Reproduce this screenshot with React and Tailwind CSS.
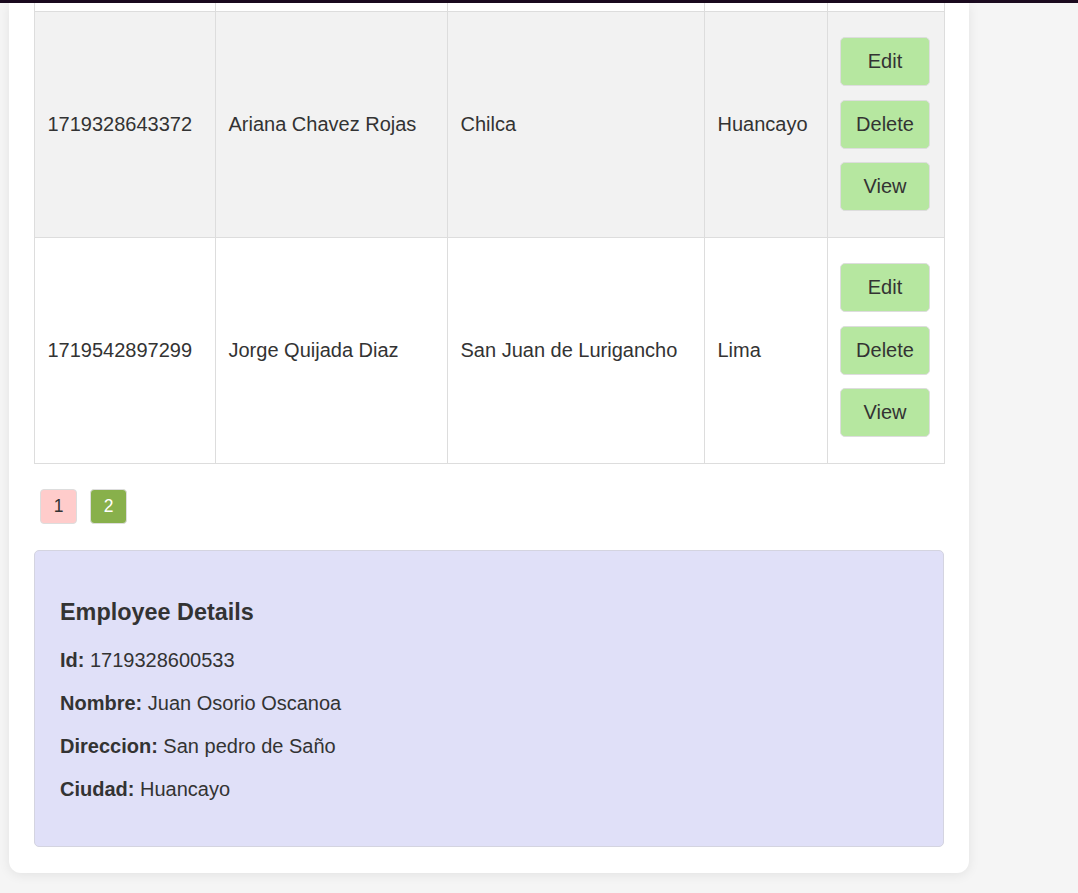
export default function App() {
  const rows = [
    { id: "1719328643372", nombre: "Ariana Chavez Rojas", direccion: "Chilca", ciudad: "Huancayo", bg: "bg-[#f2f2f2]" },
    { id: "1719542897299", nombre: "Jorge Quijada Diaz", direccion: "San Juan de Lurigancho", ciudad: "Lima", bg: "bg-white" },
  ];
  const cell = "border-r border-b border-[#dddddd] flex items-center px-[12.5px]";
  return (
    <div className="min-h-screen bg-[#f5f5f5] font-['Liberation_Sans',Arial,sans-serif] text-[#333333]">
      <div className="h-[3px] bg-[#1a0a1f]" />
      <div className="pl-[9px]">
        <div className="w-[960px] bg-white rounded-b-[12px] shadow-[0_2px_12px_rgba(0,0,0,0.08)] px-[25px] pb-[26px]">
          <div className="grid grid-cols-[181px_232px_257px_123px_117px] border-l border-[#dddddd] text-[20px] leading-[23px]">
            {[0, 1, 2, 3, 4].map((i) => (
              <div key={"p" + i} className="h-[9px] border-r border-b border-[#dddddd] bg-white" />
            ))}
            {rows.map((r) => (
              <div key={r.id} className="contents">
                <div className={`${cell} ${r.bg}`}>{r.id}</div>
                <div className={`${cell} ${r.bg}`}>{r.nombre}</div>
                <div className={`${cell} ${r.bg}`}>{r.direccion}</div>
                <div className={`${cell} ${r.bg}`}>{r.ciudad}</div>
                <div className={`border-r border-b border-[#dddddd] ${r.bg} pl-[12px] pt-[25px] pb-[26px] flex flex-col gap-[13.5px]`}>
                  {["Edit", "Delete", "View"].map((b) => (
                    <button
                      key={b}
                      className="h-[49px] w-[90px] bg-[#b6e7a0] border border-[#dddddd] rounded-[5px] text-[20px] text-[#333333] flex items-center justify-center"
                    >
                      {b}
                    </button>
                  ))}
                </div>
              </div>
            ))}
          </div>

          <div className="mt-[25px] ml-[6px] flex gap-[13px]">
            <button className="h-[35px] w-[37px] bg-[#ffcccb] border border-[#dddddd] rounded-[4px] text-[17.5px] text-[#333333] flex items-center justify-center">
              1
            </button>
            <button className="h-[35px] w-[37px] bg-[#88b04b] border border-[#dddddd] rounded-[4px] text-[17.5px] text-white flex items-center justify-center">
              2
            </button>
          </div>

          <div className="mt-[26px] bg-[#e0e0f8] border border-[#d4d4e0] rounded-[5px] px-[25px] pt-[48px] pb-[45px]">
            <h3 className="text-[23.4px] leading-[27px] font-bold mb-[23px]">Employee Details</h3>
            <div className="flex flex-col gap-[20px] text-[20px] leading-[23px]">
              <p><span className="font-bold">Id:</span> 1719328600533</p>
              <p><span className="font-bold">Nombre:</span> Juan Osorio Oscanoa</p>
              <p><span className="font-bold">Direccion:</span> San pedro de Saño</p>
              <p><span className="font-bold">Ciudad:</span> Huancayo</p>
            </div>
          </div>
        </div>
      </div>
    </div>
  );
}
